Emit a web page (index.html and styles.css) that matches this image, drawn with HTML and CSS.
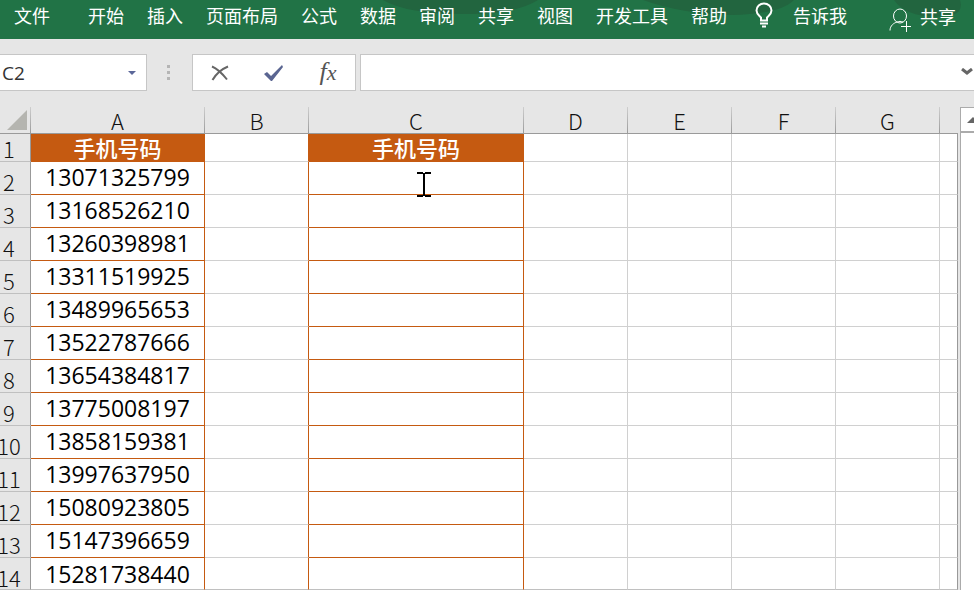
FILE: index.html
```html
<!DOCTYPE html>
<html lang="zh-CN">

<head>
  <meta charset="UTF-8" />
  <meta name="viewport" content="width=device-width, initial-scale=1.0" />
  <title>手机号码</title>
  <link rel="stylesheet" href="styles.css">
</head>

<body>
  <div class="app">
    <!-- 顶部菜单 -->
    <nav class="ribbon">
      <svg class="ribbon-bg" viewBox="0 0 974 39" preserveAspectRatio="none" aria-hidden="true">
        <path d="M383 0h155q-20 13-65 14-65 1-90-14zM643 0h151q-14 14-62 15-50-1-89-15zM894 0h66q4 14-12 16-40 4-54-16z" />
      </svg>
      <button class="tab file" type="button">文件</button>
      <button class="tab" type="button">开始</button>
      <button class="tab" type="button">插入</button>
      <button class="tab" type="button">页面布局</button>
      <button class="tab" type="button">公式</button>
      <button class="tab" type="button">数据</button>
      <button class="tab" type="button">审阅</button>
      <button class="tab" type="button">共享</button>
      <button class="tab" type="button">视图</button>
      <button class="tab" type="button">开发工具</button>
      <button class="tab" type="button">帮助</button>
      <button class="tab tell" type="button">
        <svg width="18" height="26" viewBox="0 0 18 26" aria-hidden="true">
          <path d="M6 18.500v-3C4 13.500 1.500 12 1.500 8.500a7.500 7 0 0 1 15 0c0 3.500-2.500 5-4.500 7v3zM5 21.500h8M7 24.500h4" />
        </svg>
        告诉我
      </button>
      <button class="tab share" type="button">
        <svg width="22" height="24" viewBox="0 0 22 24" aria-hidden="true">
          <path class="thin" d="M1 22.500c0-5 4-7.500 7-8.500 2-.8 4-.8 6 0" />
          <ellipse class="thin" cx="11" cy="8" rx="6.500" ry="7" />
          <path class="thin" d="M12 18.500h10M17.500 13v11" />
        </svg>
        共享
      </button>
    </nav>

    <!-- 编辑栏 -->
    <div class="formula-bar">
      <div class="name-box">
        <input type="text" value="C2" aria-label="名称框" />
        <button type="button" aria-label="展开名称框"><i class="arrow-down"></i></button>
      </div>
      <div class="dots"><i></i><i></i><i></i></div>
      <div class="tools">
        <button type="button" aria-label="取消">
          <svg width="18" height="16" viewBox="0 0 18 16"><path class="cross" d="M1 1.500c5 2 11 8 15 13M17 1.500C11 4 5 9 1.500 15" /></svg>
        </button>
        <button type="button" aria-label="输入">
          <svg width="20" height="18" viewBox="0 0 20 18"><path class="check" d="M0 10l3-2 4 4L18 1l1 2L8 17H7z" /></svg>
        </button>
        <button class="fx" type="button" aria-label="插入函数">f<span>x</span></button>
      </div>
      <div class="formula">
        <input type="text" aria-label="公式" />
        <button type="button" aria-label="展开编辑栏">
          <svg width="12" height="9" viewBox="0 0 12 9"><path class="chevron" d="M1 1l5 4 5-4" /></svg>
        </button>
      </div>
    </div>

    <!-- 表格 -->
    <div class="workspace">
      <table class="sheet">
        <colgroup>
          <col class="w-head"><col class="w-a"><col class="w-b"><col class="w-c">
          <col class="w-b"><col class="w-b"><col class="w-b"><col class="w-b"><col>
        </colgroup>
        <thead>
          <tr>
            <th class="corner"><svg width="20" height="20" viewBox="0 0 20 20" aria-hidden="true"><path d="M20 0v20H0z" /></svg></th>
            <th>A</th><th>B</th><th>C</th><th>D</th><th>E</th><th>F</th><th>G</th><th></th>
          </tr>
        </thead>
        <tbody>
          <tr class="title"><th>1</th><td>手机号码</td><td></td><td>手机号码</td><td></td><td></td><td></td><td></td><td></td></tr>
          <tr><th>2</th><td>13071325799</td><td></td><td class="active"><svg class="cursor" width="14" height="25" viewBox="0 0 14 25" aria-hidden="true"><path d="M0 1h6M8 1h6M7 1v23M0 24h6M8 24h6" /></svg></td><td></td><td></td><td></td><td></td><td></td></tr>
          <tr><th>3</th><td>13168526210</td><td></td><td></td><td></td><td></td><td></td><td></td><td></td></tr>
          <tr><th>4</th><td>13260398981</td><td></td><td></td><td></td><td></td><td></td><td></td><td></td></tr>
          <tr><th>5</th><td>13311519925</td><td></td><td></td><td></td><td></td><td></td><td></td><td></td></tr>
          <tr><th>6</th><td>13489965653</td><td></td><td></td><td></td><td></td><td></td><td></td><td></td></tr>
          <tr><th>7</th><td>13522787666</td><td></td><td></td><td></td><td></td><td></td><td></td><td></td></tr>
          <tr><th>8</th><td>13654384817</td><td></td><td></td><td></td><td></td><td></td><td></td><td></td></tr>
          <tr><th>9</th><td>13775008197</td><td></td><td></td><td></td><td></td><td></td><td></td><td></td></tr>
          <tr><th>10</th><td>13858159381</td><td></td><td></td><td></td><td></td><td></td><td></td><td></td></tr>
          <tr><th>11</th><td>13997637950</td><td></td><td></td><td></td><td></td><td></td><td></td><td></td></tr>
          <tr><th>12</th><td>15080923805</td><td></td><td></td><td></td><td></td><td></td><td></td><td></td></tr>
          <tr><th>13</th><td>15147396659</td><td></td><td></td><td></td><td></td><td></td><td></td><td></td></tr>
          <tr class="last"><th>14</th><td>15281738440</td><td></td><td></td><td></td><td></td><td></td><td></td><td></td></tr>
        </tbody>
      </table>
      <div class="scrollbar">
        <button type="button" aria-label="向上滚动"><i class="arrow-up"></i></button>
        <div class="track"></div>
      </div>
    </div>
  </div>
</body>

</html>
```
FILE: styles.css
```css
* {
  margin: 0;
  padding: 0;
  box-sizing: border-box;
}

body {
  overflow: hidden;
  background: #e6e6e6;
  font-family: "Noto Sans CJK SC", sans-serif;
}

button,
input {
  border: 0;
  background: none;
  font: inherit;
  color: inherit;
}

.app {
  min-height: 100vh;
  overflow: hidden;
}

/* 顶部菜单 */
.ribbon {
  position: relative;
  display: flex;
  align-items: flex-start;
  gap: 23px;
  height: 39px;
  padding: 0 18px 0 14px;
  background: #217346;
  color: #fff;
  white-space: nowrap;
}

.ribbon-bg {
  position: absolute;
  inset: 0;
  width: 100%;
  height: 100%;
  fill: #22653f;
}

.tab {
  position: relative;
  display: flex;
  align-items: center;
  font-size: 18px;
  line-height: 30px;
}

.file {
  margin-right: 15px;
}

.tab svg {
  fill: none;
  stroke: #fff;
  stroke-width: 2;
}

.tab svg .thin {
  stroke-width: 1;
}

.tell {
  gap: 20px;
  margin-left: 5px;
}

.share {
  gap: 9px;
  margin-left: auto;
}

.share svg {
  margin-top: 8px;
}

/* 编辑栏 */
.formula-bar {
  display: flex;
  height: 37px;
  margin-top: 15px;
}

.name-box,
.tools,
.formula {
  display: flex;
  align-items: center;
  border: 1px solid #c6c6c6;
  background: #fff;
}

.name-box {
  width: 147px;
  border-left: 0;
}

.name-box input {
  flex: 1;
  min-width: 0;
  padding-left: 2px;
  font-family: "Open Sans", sans-serif;
  font-size: 19px;
  color: #333;
}

.name-box button {
  width: 28px;
}

.arrow-down,
.arrow-up {
  display: block;
  width: 0;
  margin: 0 auto;
  border: 4px solid transparent;
}

.arrow-down {
  border-top-color: #5b6799;
  border-bottom: 0;
}

.dots {
  display: flex;
  flex-direction: column;
  justify-content: center;
  align-items: center;
  gap: 3px;
  width: 43px;
  margin-right: 2px;
}

.dots i {
  width: 3px;
  height: 3px;
  background: #b5b5b5;
}

.tools {
  width: 164px;
}

.tools button {
  flex: 1;
  height: 35px;
}

.tools svg {
  display: block;
  margin: 0 auto;
}

.cross {
  fill: none;
  stroke: #666;
  stroke-width: 2;
}

.check {
  fill: #5a6591;
}

.tools .fx {
  font: italic 26px/32px "Liberation Serif", serif;
  color: #555;
}

.fx span {
  font-size: 22px;
}

.formula {
  flex: 1;
  margin-left: 4px;
  border-right: 0;
}

.formula input {
  flex: 1;
  min-width: 0;
  height: 35px;
  padding: 0 8px;
  font-size: 18px;
}

.formula button {
  width: 13px;
}

.formula svg {
  display: block;
}

.chevron {
  fill: none;
  stroke: #666;
  stroke-width: 3;
}

/* 表格 */
.workspace {
  display: flex;
  gap: 2px;
  margin-top: 16px;
}

/* 行号列的左边有一部分在窗口外 */
.sheet {
  flex: 1;
  min-width: 0;
  margin-left: -12px;
  table-layout: fixed;
  border-collapse: separate;
  border-spacing: 0;
}

.w-head {
  width: 43px;
}

.w-a {
  width: 174px;
}

.w-b {
  width: 104px;
}

.w-c {
  width: 215px;
}

.sheet th {
  padding-bottom: 1px;
  font-size: 22px;
  font-weight: 300;
  line-height: 24px;
  color: #111;
}

.sheet thead th {
  height: 27px;
  border-right: 1px solid;
  border-bottom: 1px solid #999;
  border-image: linear-gradient(#d0d0d0, #999) 1;
  vertical-align: bottom;
}

.sheet thead th:last-child {
  border-right-width: 0;
}

.sheet .corner {
  padding-right: 3px;
  text-align: right;
}

.corner svg {
  display: block;
  margin: 0 0 2px auto;
  fill: #b5b5b0;
}

.sheet tbody th {
  border-right: 1px solid #999;
  border-bottom: 1px solid #c0c0c0;
  vertical-align: bottom;
}

.sheet td {
  height: 33px;
  padding-bottom: 2px;
  border-right: 1px solid #d0d0d0;
  border-bottom: 1px solid #d0d0d0;
  background: #fff;
  font-family: "Open Sans", "Noto Sans CJK SC", sans-serif;
  font-size: 23px;
  line-height: 24px;
  text-align: center;
  color: #000;
}

.sheet td:last-child {
  border-right-color: #999;
}

/* A、C 两列的橙色框线 */
.sheet td:nth-child(2),
.sheet td:nth-child(4) {
  border-color: #c55a11;
}

.sheet td:nth-child(3) {
  border-right-color: #c55a11;
}

.sheet .title td {
  height: 28px;
  font-family: "Noto Sans CJK SC", sans-serif;
  font-size: 22px;
  font-weight: 500;
  color: #fff;
}

.title td:nth-child(2),
.title td:nth-child(4) {
  background: #c55a11;
}

.sheet .last th,
.sheet .last td {
  padding-bottom: 0;
}

.sheet .last td {
  height: 32px;
  border-bottom-color: #c0c0c0;
}

.active {
  position: relative;
}

.cursor {
  position: absolute;
  top: 10px;
  left: 108px;
  fill: none;
  stroke: #000;
  stroke-width: 2;
}

/* 滚动条 */
.scrollbar {
  display: flex;
  flex-direction: column;
  width: 14px;
  border-left: 1px solid #ababab;
}

.scrollbar button {
  height: 26px;
  border-top: 1px solid #ababab;
  border-bottom: 2px solid #ababab;
  background: #fff;
  overflow: hidden;
}

.scrollbar .arrow-up {
  margin-left: 6px;
}

.arrow-up {
  border-width: 6px;
  border-top: 0;
  border-bottom-color: #666;
}

.track {
  flex: 1;
  background: #fff;
}
```
